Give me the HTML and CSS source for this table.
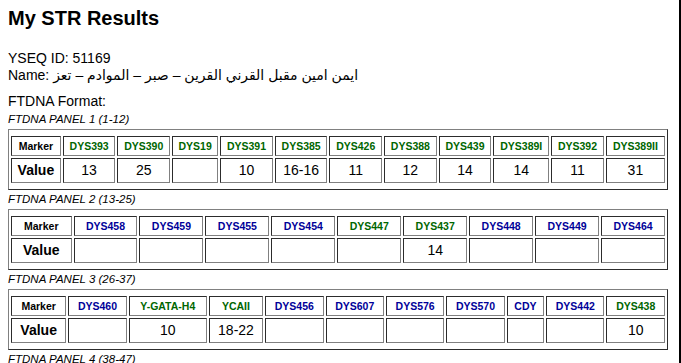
FILE: index.html
```html
<!DOCTYPE html>
<html lang="en">
<head>
<meta charset="utf-8">
<title>My STR Results</title>
<link rel="stylesheet" href="styles.css">
</head>
<body>
<div class="page">
  <h1 class="title">My STR Results</h1>
  <div class="info">
    <div>YSEQ ID: 51169</div>
    <div>Name: ايمن امين مقبل القرني القرين – صبر – الموادم – تعز</div>
  </div>
  <div class="format">FTDNA Format:</div>

  <div class="panel-label">FTDNA PANEL 1 (1-12)</div>
  <table class="str">
    <tr>
      <th class="lbl">Marker</th>
      <th class="g">DYS393</th><th class="g">DYS390</th><th class="g">DYS19</th><th class="g">DYS391</th>
      <th class="g">DYS385</th><th class="g">DYS426</th><th class="g">DYS388</th><th class="g">DYS439</th>
      <th class="g">DYS389I</th><th class="g">DYS392</th><th class="g">DYS389II</th>
    </tr>
    <tr>
      <td class="vlbl">Value</td>
      <td>13</td><td>25</td><td></td><td>10</td><td>16-16</td><td>11</td><td>12</td><td>14</td><td>14</td><td>11</td><td>31</td>
    </tr>
  </table>

  <div class="panel-label">FTDNA PANEL 2 (13-25)</div>
  <table class="str">
    <tr>
      <th class="lbl">Marker</th>
      <th class="b">DYS458</th><th class="b">DYS459</th><th class="b">DYS455</th><th class="b">DYS454</th>
      <th class="g">DYS447</th><th class="g">DYS437</th><th class="b">DYS448</th><th class="b">DYS449</th>
      <th class="b">DYS464</th>
    </tr>
    <tr>
      <td class="vlbl">Value</td>
      <td></td><td></td><td></td><td></td><td></td><td>14</td><td></td><td></td><td></td>
    </tr>
  </table>

  <div class="panel-label">FTDNA PANEL 3 (26-37)</div>
  <table class="str">
    <tr>
      <th class="lbl">Marker</th>
      <th class="b">DYS460</th><th class="g">Y-GATA-H4</th><th class="g">YCAII</th><th class="b">DYS456</th>
      <th class="b">DYS607</th><th class="b">DYS576</th><th class="b">DYS570</th><th class="b">CDY</th>
      <th class="b">DYS442</th><th class="g">DYS438</th>
    </tr>
    <tr>
      <td class="vlbl">Value</td>
      <td></td><td>10</td><td>18-22</td><td></td><td></td><td></td><td></td><td></td><td></td><td>10</td>
    </tr>
  </table>

  <div class="panel-label">FTDNA PANEL 4 (38-47)</div>
  <table class="str">
    <tr>
      <th class="lbl">Marker</th>
      <th class="b">DYS531</th><th class="b">DYS578</th><th class="b">DYF395S1</th><th class="b">DYS590</th>
      <th class="b">DYS537</th><th class="b">DYS641</th><th class="b">DYS472</th><th class="b">DYF406S1</th>
      <th class="b">DYS511</th>
    </tr>
    <tr>
      <td class="vlbl">Value</td>
      <td></td><td></td><td></td><td></td><td></td><td></td><td></td><td></td><td></td>
    </tr>
  </table>
</div>
</body>
</html>
```

FILE: styles.css
```css
html, body {
  margin: 0;
  padding: 0;
  background: #fff;
}

body {
  font-family: "Liberation Sans", Arial, "DejaVu Sans", sans-serif;
  font-size: 14px;
  color: #000;
}

.page {
  box-sizing: border-box;
  min-height: 363px;
  padding: 0 11px 8px 8px;
  border-right: 2px solid #000;
}

.title {
  margin: 0 0 20px;
  padding-top: 6px;
  font-size: 20px;
  line-height: 24px;
  font-weight: bold;
}

.info {
  line-height: 17px;
  margin-bottom: 9px;
}

.format {
  line-height: 17px;
}

.panel-label {
  font-size: 11.5px;
  font-style: italic;
  line-height: 14px;
  margin: 2px 0 3px;
}

.str {
  width: 100%;
  border: 1px outset gray;
  border-collapse: separate;
  border-spacing: 2px;
  padding: 4px 0;
}

.str th,
.str td {
  border: 1px inset gray;
  text-align: center;
}

.str th {
  font-size: 10.5px;
  font-weight: bold;
  line-height: 14px;
  padding: 2px 3px;
}

.str th.lbl {
  color: #000;
}

.str th.g {
  color: #006600;
}

.str th.b {
  color: #000099;
}

.str td {
  font-size: 14px;
  line-height: 17px;
  padding: 3px 3px;
}

.str td.vlbl {
  font-weight: bold;
}
```
